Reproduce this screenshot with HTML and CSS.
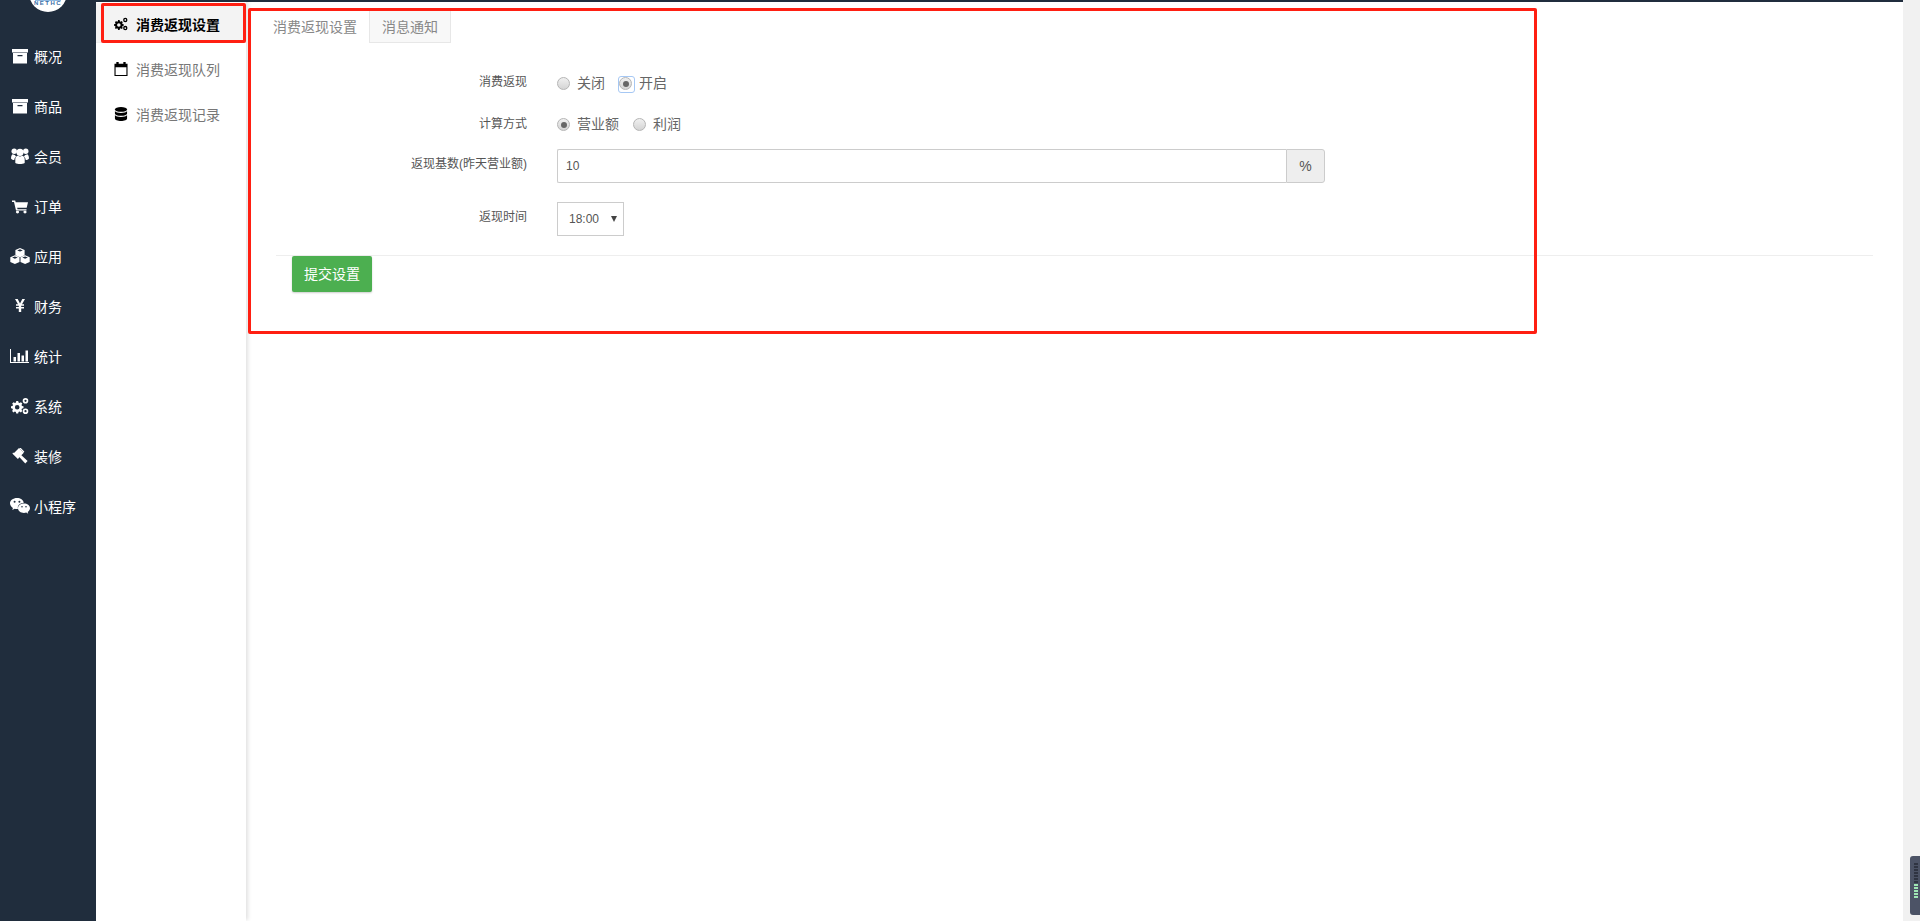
FILE: index.html
```html
<!DOCTYPE html>
<html lang="zh-CN">
<head>
<meta charset="utf-8">
<title>消费返现设置</title>
<link rel="stylesheet" href="styles.css">
</head>
<body>
<svg class="defs" width="0" height="0" aria-hidden="true">
  <symbol id="i-archive" viewBox="0 0 16 16"><path fill-rule="evenodd" d="M0 1h16v3.600H0zM1 5h14v10.500H1zM5.500 7v1.200h5V7z"/></symbol>
  <symbol id="i-users" viewBox="0 0 18 16"><circle cx="9" cy="4.300" r="3.600"/><circle cx="3.200" cy="3.300" r="2.700"/><circle cx="14.800" cy="3.300" r="2.700"/><path d="M4.300 15v-3.800C4.300 9.300 5.600 8 7 7.800c.6.500 1.300.7 2 .7s1.400-.2 2-.7c1.400.2 2.700 1.500 2.700 3.400V15c-2.500 1.300-7 1.300-9.400 0zM0 10.500C0 8 .9 6.300 2 6.300c.5.400 1.100.7 1.800.7.400.7.900 1 1.400 1.200-1.100 1-1.900 2.300-1.900 3.900-1.300 0-2.400-.6-3.300-1.600zM18 10.500C18 8 17.100 6.300 16 6.300c-.5.400-1.100.7-1.800.7-.4.700-.9 1-1.400 1.200 1.100 1 1.900 2.300 1.900 3.900 1.300 0 2.400-.6 3.300-1.600z"/></symbol>
  <symbol id="i-cart" viewBox="0 0 16 16"><g transform="translate(0 1.500) scale(1 .88)"><path d="M0 1h3.200l.5 2H16l-1.300 6.500H5.200l.3 1.500h9v1.500H4L2 2.800H0z"/><circle cx="5.500" cy="14.300" r="1.600"/><circle cx="13" cy="14.300" r="1.600"/></g></symbol>
  <symbol id="i-cubes" viewBox="0 0 20 16"><path d="M10 0l4.600 2v5.300L10 9.300 5.400 7.300V2zM4.900 7.200l4.600 2v4.700L4.900 16 .3 13.900V9.200zM15.100 7.200l4.600 2v4.700L15.100 16l-4.600-2.100V9.200z"/><path d="M10 3.600L7.200 2.400 10 1.200l2.800 1.200zM4.900 10.800L2.100 9.600l2.800-1.200 2.800 1.200zM15.100 10.800l-2.800-1.200 2.800-1.200 2.800 1.200z" fill="#202d3d"/></symbol>
  <symbol id="i-yen" viewBox="0 0 10 13"><path d="M0 0h2.700L5 4.500 7.300 0H10L7 5.200h2V6.700H6.200V7.900H9V9.400H6.200V13H3.800V9.400H1V7.900h2.800V6.700H1V5.200h2z"/></symbol>
  <symbol id="i-chart" viewBox="0 0 19 14"><path d="M0 0h1v13h18v1H0z"/><path d="M3.500 8h2.500v4.500H3.500zM7.500 4h2.500v8.500H7.500zM11.500 6.500h2.500v6h-2.500zM15.500 1.500h2.500v11h-2.500z"/></symbol>
  <symbol id="i-cogs" viewBox="0 0 18 16"><path fill-rule="evenodd" d="M5.200 3h2l.3 1.500 1.100.5 1.300-.8 1.400 1.400-.8 1.300.5 1.100 1.500.3v2l-1.500.3-.5 1.100.8 1.300-1.400 1.400-1.300-.8-1.100.5-.3 1.500h-2l-.3-1.500-1.100-.5-1.300.8-1.400-1.400.8-1.300-.5-1.100L0 10.300v-2l1.500-.3.5-1.100-.8-1.300 1.400-1.400 1.300.8 1.100-.5zm1 4a2.300 2.300 0 1 0 0 4.600 2.300 2.300 0 0 0 0-4.600z"/><path fill-rule="evenodd" d="M14.500 0a2.800 2.800 0 1 1 0 5.600 2.800 2.800 0 0 1 0-5.600zm0 1.700a1.100 1.100 0 1 0 0 2.200 1.100 1.100 0 0 0 0-2.200zM14.500 10.400a2.800 2.800 0 1 1 0 5.600 2.800 2.800 0 0 1 0-5.600zm0 1.700a1.100 1.100 0 1 0 0 2.200 1.100 1.100 0 0 0 0-2.200z"/></symbol>
  <symbol id="i-gavel" viewBox="0 0 16 16"><path d="M7 0l4.800 4.800-5.900 5.900L1 5.900zM8.600 6.400l7 6.500-2.300 2.600-6.500-7z"/><path d="M.3 5.300l.9-.9 5.500 5.500-.9.9zM7.200.1l.9-.9 4.300 4.500-.9.900z"/></symbol>
  <symbol id="i-wechat" viewBox="0 0 20 16"><path fill-rule="evenodd" d="M7 0c3.500 0 6.300 2 6.800 4.700C10.500 4.800 7.800 7 7.800 9.700c0 .5.100.9.200 1.300H7c-.9 0-1.600-.1-2.300-.3L2.300 12l.6-2C1.100 8.800 0 7.200 0 5.300 0 2.300 3.100 0 7 0zM4.600 2.700a1 1 0 1 0 0 2 1 1 0 0 0 0-2zM9.400 2.700a1 1 0 1 0 0 2 1 1 0 0 0 0-2z"/><path fill-rule="evenodd" d="M14 5.600c3.300 0 6 2 6 4.600 0 1.500-1 2.800-2.300 3.700l.5 1.800-2-1.100c-.7.200-1.400.3-2.200.3-3.300 0-6-2-6-4.700s2.700-4.600 6-4.600zM12 8a.8.8 0 1 0 0 1.600.8.800 0 0 0 0-1.600zM16 8a.8.8 0 1 0 0 1.600.8.800 0 0 0 0-1.600z"/></symbol>
  <symbol id="i-calendar" viewBox="0 0 14 15"><path fill-rule="evenodd" d="M0 2h2V0h2.500v2h5V0H12v2h2v13H0zM1.200 5.500v8.300h11.600V5.500z"/></symbol>
  <symbol id="i-database" viewBox="0 0 13 15"><ellipse cx="6.500" cy="2.600" rx="6.500" ry="2.600"/><path d="M0 4.300c1 1.500 3.500 2.100 6.500 2.100s5.500-.6 6.500-2.100V7c0 1.400-2.900 2.500-6.500 2.500S0 8.400 0 7zM0 8.500c1 1.500 3.500 2.100 6.500 2.100s5.500-.6 6.500-2.100v3.900c0 1.500-2.900 2.600-6.500 2.600S0 13.900 0 12.400z"/></symbol>
</svg>

<div class="app">
  <aside class="sidebar">
    <div class="logo"><span class="logo-mark"></span><span class="logo-text">NETHC</span></div>
    <nav class="side-nav">
      <a class="side-item"><svg class="side-icon ic-16"><use href="#i-archive"/></svg><span>概况</span></a>
      <a class="side-item"><svg class="side-icon ic-16"><use href="#i-archive"/></svg><span>商品</span></a>
      <a class="side-item"><svg class="side-icon ic-18"><use href="#i-users"/></svg><span>会员</span></a>
      <a class="side-item"><svg class="side-icon ic-16"><use href="#i-cart"/></svg><span>订单</span></a>
      <a class="side-item"><svg class="side-icon ic-20"><use href="#i-cubes"/></svg><span>应用</span></a>
      <a class="side-item"><svg class="side-icon ic-yen"><use href="#i-yen"/></svg><span>财务</span></a>
      <a class="side-item"><svg class="side-icon ic-chart"><use href="#i-chart"/></svg><span>统计</span></a>
      <a class="side-item"><svg class="side-icon ic-18"><use href="#i-cogs"/></svg><span>系统</span></a>
      <a class="side-item"><svg class="side-icon ic-16"><use href="#i-gavel"/></svg><span>装修</span></a>
      <a class="side-item"><svg class="side-icon ic-wechat"><use href="#i-wechat"/></svg><span>小程序</span></a>
    </nav>
  </aside>

  <aside class="subnav">
    <a class="sub-item is-active"><svg class="sub-icon"><use href="#i-cogs"/></svg><span>消费返现设置</span></a>
    <a class="sub-item"><svg class="sub-icon"><use href="#i-calendar"/></svg><span>消费返现队列</span></a>
    <a class="sub-item"><svg class="sub-icon"><use href="#i-database"/></svg><span>消费返现记录</span></a>
  </aside>

  <main class="main">
    <div class="tabs">
      <a class="tab is-active">消费返现设置</a>
      <a class="tab">消息通知</a>
    </div>
    <form class="form">
      <div class="row row-switch">
        <label class="row-label">消费返现</label>
        <div class="radios">
          <span class="radio-opt"><i class="radio"></i>关闭</span>
          <span class="radio-opt"><i class="radio is-on is-focus"></i>开启</span>
        </div>
      </div>
      <div class="row row-method">
        <label class="row-label">计算方式</label>
        <div class="radios">
          <span class="radio-opt"><i class="radio is-on"></i>营业额</span>
          <span class="radio-opt"><i class="radio"></i>利润</span>
        </div>
      </div>
      <div class="row row-base">
        <label class="row-label">返现基数(昨天营业额)</label>
        <div class="input-group">
          <input class="input" type="text" value="10">
          <span class="addon">%</span>
        </div>
      </div>
      <div class="row row-time">
        <label class="row-label">返现时间</label>
        <div class="select-wrap">
          <select class="select"><option>18:00</option></select>
        </div>
      </div>
      <hr class="divider">
      <button class="submit" type="button">提交设置</button>
    </form>
  </main>

  <div class="scrollbar"></div>
</div>

<div class="mark mark-nav"></div>
<div class="mark mark-form"></div>
<div class="meter">
  <span class="tick"></span><span class="tick"></span><span class="tick"></span><span class="tick"></span><span class="tick"></span><span class="tick"></span><span class="tick"></span>
  <span class="tick is-lit"></span><span class="tick is-lit"></span><span class="tick is-lit"></span><span class="tick is-lit"></span><span class="tick is-lit"></span>
</div>
</body>
</html>
```

FILE: styles.css
```css
* { box-sizing: border-box; }
html, body { margin: 0; height: 100%; overflow: hidden; background: #fff; }
body {
  font-family: "Liberation Sans", "Noto Sans CJK SC", sans-serif;
  font-size: 14px;
  color: #666;
}
.defs { position: absolute; }
svg { fill: currentColor; display: block; }

.app { display: flex; height: 921px; }

/* primary sidebar */
.sidebar { width: 96px; flex: none; background: #202d3d; color: #fff; overflow: hidden; }
.logo {
  width: 38px; height: 38px; margin: -26px auto 0; border-radius: 50%;
  background: #fff; overflow: hidden;
  display: flex; flex-direction: column; align-items: center; justify-content: flex-end;
  padding-bottom: 6px;
}
.logo-mark { width: 26px; height: 2px; background: #8fb8e0; flex: none; }
.logo-text { font-size: 6px; line-height: 5px; letter-spacing: 1.500px; color: #3a6ea5; font-weight: 700; flex: none; }
.side-nav { display: flex; flex-direction: column; padding-top: 20px; }
.side-item { height: 50px; display: flex; align-items: center; position: relative; padding-left: 34px; color: #fff; line-height: 50px; }
.side-icon { position: absolute; top: 50%; }
.ic-16 { width: 16px; height: 16px; left: 12px; margin-top: -9px; }
.ic-18 { width: 18px; height: 16px; left: 11px; margin-top: -9px; }
.ic-20 { width: 20px; height: 16px; left: 10px; margin-top: -9px; }
.ic-yen { width: 10px; height: 13px; left: 15px; margin-top: -8px; }
.ic-chart { width: 19px; height: 14px; left: 10px; margin-top: -8px; }
.ic-wechat { width: 20px; height: 16px; left: 10px; margin-top: -9px; }

/* secondary nav */
.subnav { width: 150px; flex: none; padding-top: 1px; border-top: 2px solid #202d3d; position: relative; z-index: 1; box-shadow: 3px 0 4px -1px rgba(0,0,0,.12); background: #fff; }
.sub-item { height: 45px; display: flex; align-items: center; padding-left: 18px; gap: 8px; color: #777; }
.sub-item.is-active { background: #f3f3f3; color: #000; font-weight: 700; height: 40px; padding-top: 2px; margin-bottom: 3px; border-bottom: 1px solid #eee; }
.sub-icon { width: 14px; height: 14px; color: #000; flex: none; }

/* main */
.main { flex: 1; border-top: 2px solid #202d3d; padding: 8px 30px 0 13px; min-width: 0; }
.tabs { display: flex; height: 33px; }
.tab { padding: 0 12px 0 14px; line-height: 35px; color: #888; }
.tab + .tab { background: #f8f8f8; border: 1px solid #e7e7e7; line-height: 33px; padding: 0 12px; color: #888; }

.row { display: flex; align-items: flex-start; }
.row-label { width: 268px; text-align: right; font-size: 12px; line-height: 16px; color: #555; flex: none; margin-right: 30px; }
.row-switch { margin-top: 27px; height: 26px; }
.row-switch .row-label { padding-top: 4px; }
.row-method { margin-top: 15px; height: 26px; }
.row-method .row-label { padding-top: 5px; }
.row-base { margin-top: 12px; height: 34px; }
.row-base .row-label { padding-top: 7px; }
.row-time { margin-top: 19px; height: 34px; }
.row-time .row-label { padding-top: 7px; }

.radios { display: flex; height: 26px; align-items: center; gap: 14px; color: #666; }
.radio-opt { display: flex; align-items: center; line-height: 26px; }
.radio {
  width: 13px; height: 13px; border-radius: 50%; margin: 1px 7px 0 0; display: block; position: relative;
  border: 1px solid #b5b5b5; background: linear-gradient(#f0f0f0, #d4d4d4);
}
.radio.is-on::after { content: ""; position: absolute; left: 2.500px; top: 2.500px; width: 6px; height: 6px; border-radius: 50%; background: #666; }
.radio.is-focus::before { content: ""; position: absolute; left: -2px; top: -2px; width: 15px; height: 15px; border: 1.500px solid #a6c8f4; border-radius: 3px; }

.input-group { display: flex; width: 768px; height: 34px; }
.input {
  flex: 1; min-width: 0; height: 34px; padding: 0 8px; border: 1px solid #ccc; border-right: 0;
  font: 12px "Liberation Sans", sans-serif; color: #555; outline: 0; border-radius: 2px 0 0 2px;
}
.addon {
  width: 39px; flex: none; display: flex; align-items: center; justify-content: center;
  background: #eee; border: 1px solid #ccc; border-radius: 0 3px 3px 0; font-size: 14px; color: #555;
}
.select-wrap { position: relative; width: 67px; height: 34px; }
.select-wrap::after {
  content: ""; position: absolute; left: 54px; top: 14px;
  border-left: 3.500px solid transparent; border-right: 3.500px solid transparent; border-top: 6px solid #444;
}
.select {
  appearance: none; width: 100%; height: 34px; padding: 0 0 0 11px; border: 1px solid #ccc; border-radius: 0;
  background: #fff; font: 12px "Liberation Sans", sans-serif; color: #555; outline: 0;
}

.divider { margin: 19px 0 0 17px; border: 0; border-top: 1px solid #eee; height: 1px; }
.submit {
  display: block; width: 80px; height: 36px; margin: 0 0 0 33px; border: 0; border-radius: 2px; padding: 0 0 2px;
  background: #4caf50; color: #fff; font: 14px "Liberation Sans", "Noto Sans CJK SC", sans-serif;
  box-shadow: 0 1px 2px rgba(0,0,0,.2);
}

.scrollbar { width: 17px; flex: none; background: #f1f1f1; }

/* overlays: red annotation boxes and the floating meter */
.mark { position: absolute; border: 3px solid #ff1f12; border-radius: 2px; z-index: 5; pointer-events: none; }
.mark-nav { left: 101px; top: 3px; width: 145px; height: 40px; }
.mark-form { left: 248px; top: 8px; width: 1289px; height: 326px; }

.meter {
  position: absolute; left: 1910px; top: 856px; width: 10px; height: 59px; z-index: 6;
  background: #4c5366; border-radius: 3px 0 0 3px; padding: 7px 2px 0 4px;
  display: flex; flex-direction: column; gap: 1px;
}
.tick { display: block; height: 2px; background: #2f3442; }
.tick.is-lit { background: #9fe6b4; }
```
